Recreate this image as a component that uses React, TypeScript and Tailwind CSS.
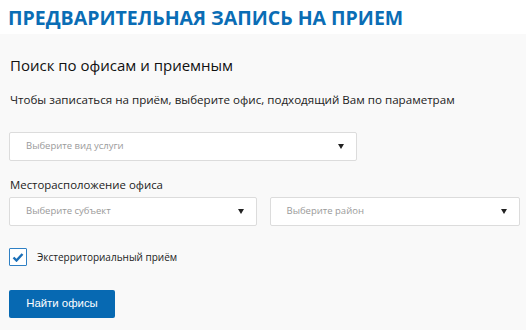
import React from 'react';

const Select: React.FC<{ placeholder: string; className?: string }> = ({ placeholder, className = '' }) => (
  <div
    className={`flex items-center justify-between h-[29px] bg-white border border-[#dcdcdc] rounded-[2px] pl-[16px] pr-[12px] ${className}`}
  >
    <span className="text-[9.5px] text-[#9a9a9a]">{placeholder}</span>
    <svg width="6" height="5" viewBox="0 0 6 5">
      <path d="M0 0h6L3 5z" fill="#222" />
    </svg>
  </div>
);

export default function App() {
  return (
    <div className="w-[526px] h-[330px] overflow-hidden bg-[#f9f9f9] font-['Open_Sans',sans-serif]">
      <div className="bg-white h-[34px] pl-[8px] pt-[5px]">
        <h1 className="text-[19.5px] leading-[26px] font-bold text-[#0a6db5]">
          ПРЕДВАРИТЕЛЬНАЯ ЗАПИСЬ НА ПРИЕМ
        </h1>
      </div>
      <div className="pl-[9px] pr-[6px]">
        <h2 className="text-[15px] leading-[22px] text-[#111] mt-[20px] pl-[1px]">Поиск по офисам и приемным</h2>
        <p className="text-[11.6px] leading-[18px] text-[#222] mt-[15px] pl-[1px]">
          Чтобы записаться на приём, выберите офис, подходящий Вам по параметрам
        </p>
        <Select placeholder="Выберите вид услуги" className="w-[348px] mt-[23px]" />
        <div className="text-[11.4px] leading-[16px] text-[#222] mt-[16px] pl-[1px]">Месторасположение офиса</div>
        <div className="flex gap-[13px] mt-[4px]">
          <Select placeholder="Выберите субъект" className="w-[248px]" />
          <Select placeholder="Выберите район" className="w-[251px]" />
        </div>
        <div className="flex items-center gap-[10px] mt-[22px]">
          <div className="w-[18px] h-[18px] bg-white border border-[#2f80c4] rounded-[1px] flex items-center justify-center">
            <svg width="12" height="10" viewBox="0 0 12 10">
              <path d="M1.5 5.5l3 3L10.5 2" fill="none" stroke="#1a6fb8" strokeWidth="2.4" />
            </svg>
          </div>
          <span className="text-[10px] text-[#222]">Экстерриториальный приём</span>
        </div>
        <button className="mt-[24px] w-[106px] h-[28px] bg-[#0769b2] rounded-[2px] text-white text-[11.4px] font-['Liberation_Sans',sans-serif]">
          Найти офисы
        </button>
      </div>
    </div>
  );
}
